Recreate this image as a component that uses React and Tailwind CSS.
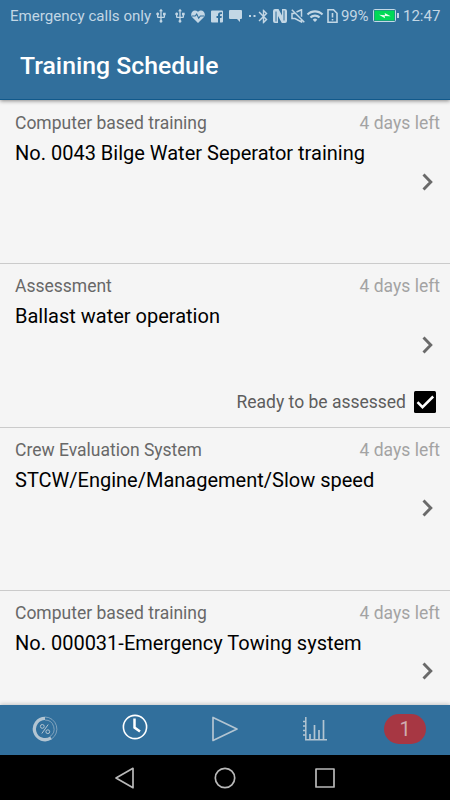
import React, { useState } from "react";
import { MdUsb, MdBluetooth, MdWifi } from "react-icons/md";

const schedule = [
  { id: 1, type: "Computer based training", title: "No. 0043 Bilge Water Seperator training", due: "4 days left" },
  { id: 2, type: "Assessment", title: "Ballast water operation", due: "4 days left", assess: true },
  { id: 3, type: "Crew Evaluation System", title: "STCW/Engine/Management/Slow speed", due: "4 days left" },
  { id: 4, type: "Computer based training", title: "No. 000031-Emergency Towing system", due: "4 days left" },
];

function StatusBar() {
  return (
    <div className="h-8 shrink-0 flex items-center pl-[10px] text-[#c3d7e5]">
      <span className="w-[142px] text-[15.1px] whitespace-nowrap">Emergency calls only</span>
      <MdUsb className="ml-[1px] shrink-0" size={16} />
      <MdUsb className="ml-[3px] shrink-0" size={16} />
      {/* heart rate */}
      <svg className="ml-[3px] shrink-0" width="14" height="13" viewBox="0 0 14 13">
        <path d="M7 13 1.2 7.2C-2 3 3-2 7 1.8 11-2 16 3 12.8 7.2Z" fill="currentColor" />
        <path d="M1 6h3.2l1.5-2 2 4.2L9.3 6H13" fill="none" stroke="#316f9c" strokeWidth="1.1" />
      </svg>
      {/* facebook */}
      <svg className="ml-[6px] shrink-0" width="12" height="13" viewBox="0 0 12 13">
        <path d="M1 .5h10a1 1 0 0 1 1 1v10a1 1 0 0 1-1 1H9V8h1.500l.3-2H9V5q0-1 1-1h1V2.200H9.500Q7 2.200 7 4.700V6H5.500v2H7v4.500H1a1 1 0 0 1-1-1v-10a1 1 0 0 1 1-1Z" fill="currentColor" />
      </svg>
      <svg className="ml-[6px] shrink-0" width="13" height="12" viewBox="0 0 13 12">
        <path d="M1 0h11a1 1 0 0 1 1 1v7a1 1 0 0 1-1 1h-1v3L8 9H1a1 1 0 0 1-1-1V1a1 1 0 0 1 1-1Z" fill="currentColor" />
      </svg>
      <svg className="ml-[7px] shrink-0" width="7" height="2" viewBox="0 0 7 2">
        <path d="M0 0h2v2H0zM4.500 0h2v2h-2z" fill="currentColor" />
      </svg>
      <MdBluetooth className="ml-[-1px] shrink-0" size={17} />
      {/* nfc */}
      <svg className="ml-[1px] shrink-0" width="14" height="14" viewBox="0 0 14 14">
        <path d="M2 0h3.500L9 6.500V0h3a2 2 0 0 1 2 2v10a2 2 0 0 1-2 2H8.800L5 7v7H2a2 2 0 0 1-2-2V2a2 2 0 0 1 2-2Z" fill="currentColor" />
        <path d="M3 2.500v10M11 1.500v10" fill="none" stroke="#316f9c" strokeWidth="1" />
      </svg>
      {/* muted */}
      <svg className="ml-[4px] shrink-0" width="14" height="14" viewBox="0 0 14 14">
        <path d="M3.500 4.500H1v5h3l6.500 3.500v-3M5.500 3l5-2.300v7M.8.8l12.500 12.500" fill="none" stroke="currentColor" strokeWidth="1.500" />
      </svg>
      <MdWifi className="ml-[1px] shrink-0" size={18} />
      {/* sim alert */}
      <svg className="ml-[3px] shrink-0" width="11" height="14" viewBox="0 0 11 14">
        <path d="M1 .8h5.500L10 4.300v8.900H1ZM5.500 4v4.500M5.500 10v1.500" fill="none" stroke="currentColor" strokeWidth="1.600" />
      </svg>
      <span className="ml-[3px] w-[31px] text-[15px] tracking-[-0.2px]">99%</span>
      {/* battery */}
      <svg className="shrink-0 ml-[1px] mb-px" width="27" height="13" viewBox="0 0 27 13">
        <rect x=".5" y=".5" width="22" height="12" rx="1" fill="#316f9c" stroke="#c4d8e6" />
        <rect x="1.500" y="1.500" width="20" height="10" fill="#00d957" />
        <path d="M25 4v5" stroke="currentColor" strokeWidth="2" />
        <path d="m6 5.800 6 .4-.3-2.200 6 3.300-6-.3.3 2.300Z" fill="#eafff0" />
      </svg>
      <span className="ml-[3px] text-[15px]">12:47</span>
    </div>
  );
}

function ScheduleRow({ item, ready, onToggle }) {
  return (
    <div className="h-[163.33px] shrink-0 flex flex-col border-b border-[#cbcbcb] pl-[15px] pr-[10px] pt-[11px]">
      <div className="flex justify-between text-[17.5px] leading-[22px]">
        <span className="text-[#686868]">{item.type}</span>
        <span className="text-[#a3a3a3]">{item.due}</span>
      </div>
      <div className="mt-[6px] text-[20px] leading-[26px] text-black whitespace-nowrap">{item.title}</div>
      <div className="flex justify-end pr-[6px] mt-[6.5px]">
        <svg width="14" height="18" viewBox="0 0 14 18">
          <path d="m3.500 1.500 7.300 7.500-7.300 7.500" fill="none" stroke="#6a6a6a" strokeWidth="2.900" />
        </svg>
      </div>
      {item.assess && (
        <button onClick={onToggle} className="mt-[37px] pr-[4px] flex items-center justify-end gap-2">
          <span className="text-[17.5px] leading-[22px] text-[#5d5d5d]">Ready to be assessed</span>
          <svg width="22" height="22" viewBox="0 0 22 22">
            <rect width="22" height="22" rx="1.500" fill="#000" />
            {ready && <path d="m3.500 11.200 5 5L19.200 5.500" fill="none" stroke="#fff" strokeWidth="2.500" />}
          </svg>
        </button>
      )}
    </div>
  );
}

function TabBar() {
  return (
    <div className="h-[50px] shrink-0 grid grid-cols-5 items-center justify-items-center bg-[#316f9c] pb-[2px] text-[#b3c5d2]">
      <svg width="26" height="26" viewBox="0 0 26 26" fill="none" stroke="currentColor">
        <path d="M13 2.300a10.700 10.700 0 1 0 6 19.600" strokeWidth="3.300" />
        <path d="M13 1a12 12 0 0 1 6.500 22M13 4a9 9 0 0 1 5 16.500" strokeWidth=".6" />
        <circle cx="10.300" cy="10.400" r="1.900" strokeWidth="1" />
        <circle cx="15.800" cy="15.700" r="1.900" strokeWidth="1" />
        <path d="m16.200 8.500-6.400 9" strokeWidth="1" />
      </svg>
      <svg className="mb-1" width="26" height="26" viewBox="0 0 26 26" fill="none" stroke="#fff">
        <circle cx="13" cy="13" r="11.600" strokeWidth="1.600" />
        <path d="M12.500 4.500v9l5.500 4" strokeWidth="2.500" />
      </svg>
      <svg width="26" height="26" viewBox="0 0 26 26" fill="none" stroke="currentColor">
        <path d="M1 1.500v23L25 13Z" strokeWidth="1.700" strokeLinejoin="round" />
      </svg>
      <svg width="26" height="26" viewBox="0 0 26 26" fill="none" stroke="currentColor">
        <path d="M3.800 1v23.500M3 23.800h22" strokeWidth="1.500" />
        <path d="M1 5.500h3M1 10h3M1 14.500h3M1 19h3" strokeWidth="1.500" />
        <path d="M8 24v-6M12.500 24V9M17 24V14M21.500 24V4" strokeWidth="1.700" />
      </svg>
      <div className="w-[42px] h-[30px] rounded-full bg-[#a73743] text-[#d0adb1] text-[20px] leading-[30px] text-center">1</div>
    </div>
  );
}

export default function App() {
  const [ready, setReady] = useState(true);

  return (
    <div className="w-[450px] h-[800px] flex flex-col overflow-hidden bg-[#f5f5f5] font-['Roboto',sans-serif]">
      <header className="relative h-[100px] shrink-0 flex flex-col bg-[#316f9c] border-b border-[#11598b] shadow-[0_1px_4px_rgba(0,0,0,0.45)]">
        <StatusBar />
        <h1 className="pl-5 pt-[18px] text-[24.75px] leading-[32px] font-medium text-white">Training Schedule</h1>
      </header>

      <main className="flex-1 min-h-0 overflow-hidden flex flex-col pt-[1px]">
        {schedule.map((item) => (
          <ScheduleRow key={item.id} item={item} ready={ready} onToggle={() => setReady(!ready)} />
        ))}
      </main>

      <div className="relative shrink-0 shadow-[0_-1px_4px_rgba(0,0,0,0.2)]">
        <TabBar />
      </div>

      {/* system navigation */}
      <nav className="h-[45px] shrink-0 flex items-center justify-center gap-[78px] bg-black">
        <svg width="22" height="22" viewBox="0 0 22 22" fill="none" stroke="#b9b9b9" strokeWidth="1.700" strokeLinejoin="round">
          <path d="M19 1.300v19.400L2 11Z" />
        </svg>
        <svg width="22" height="22" viewBox="0 0 22 22" fill="none" stroke="#b9b9b9" strokeWidth="1.700">
          <circle cx="11" cy="11" r="9.700" />
        </svg>
        <svg width="22" height="22" viewBox="0 0 22 22" fill="none" stroke="#b9b9b9" strokeWidth="1.700" strokeLinejoin="round">
          <rect x="2" y="2" width="18" height="18" />
        </svg>
      </nav>
    </div>
  );
}
